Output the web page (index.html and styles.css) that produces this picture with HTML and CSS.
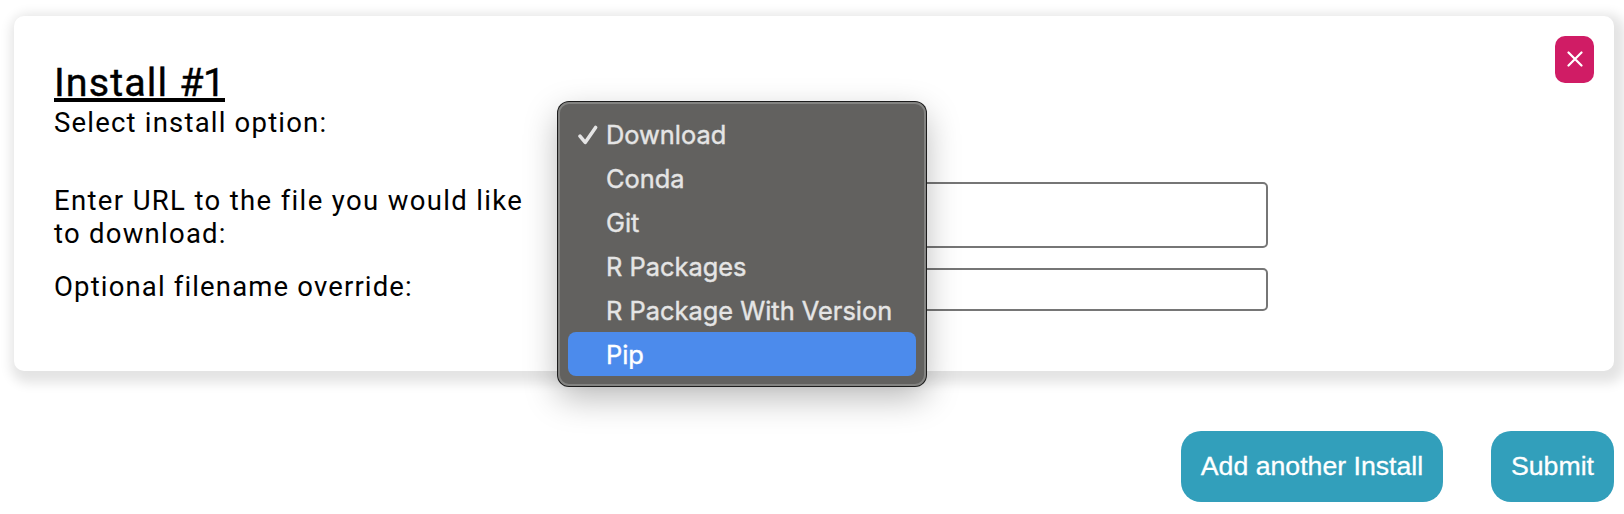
FILE: index.html
```html
<!DOCTYPE html>
<html lang="en">
<head>
<meta charset="utf-8">
<title>Install</title>
<link rel="stylesheet" href="styles.css">
</head>
<body>
<main class="page">
  <section class="card">
    <form class="fields">
      <h2 class="title"><span class="title-text">Install <span class="title-number">#1</span></span></h2>
      <div class="row row-select">
        <label class="label label-select">Select install option:</label>
        <div class="select">
          <ul class="menu">
            <li class="option"><svg class="check" viewBox="0 0 20 20"><path d="M2 11.2 7.2 17.4 17.6 2.4"/></svg>Download</li>
            <li class="option">Conda</li>
            <li class="option">Git</li>
            <li class="option">R Packages</li>
            <li class="option">R Package With Version</li>
            <li class="option option-active">Pip</li>
          </ul>
        </div>
      </div>
      <div class="row row-url">
        <label class="label label-url">Enter URL to the file you would like<br><span class="label-url-end">to download:</span></label>
        <input class="input" type="text">
      </div>
      <div class="row row-name">
        <label class="label label-name">Optional filename override:</label>
        <input class="input" type="text">
      </div>
    </form>
    <button class="close" aria-label="Remove"><svg class="cross" viewBox="0 0 16 16"><path d="M1.5 1.5 14.5 14.5M14.5 1.5 1.5 14.5"/></svg></button>
  </section>
  <div class="actions">
    <button class="button button-add">Add another Install</button>
    <button class="button button-submit">Submit</button>
  </div>
</main>
</body>
</html>
```
FILE: styles.css
```css
* { box-sizing: border-box; }
body { margin: 0; background: #fff; overflow: hidden; font-family: Roboto, sans-serif; color: #000; }
.page { padding: 16px 10px 0 14px; }
.card {
  display: flex;
  justify-content: space-between;
  align-items: flex-start;
  height: 355px;
  padding: 20px 20px 0 40px;
  border-radius: 10px;
  background: #fff;
  box-shadow: 4px 5px 12px 7px #e4e4e4;
}
.fields { width: 1214px; padding-top: 22px; }
.title { margin: 0; height: 48px; font-size: 39.5px; line-height: 50px; font-weight: 400; -webkit-text-stroke: 0.4px #000; }
.title-text { display: inline-block; width: 171px; height: 44px; border-bottom: 4px solid #000; white-space: nowrap; letter-spacing: 1.1px; }
.title-number { letter-spacing: -0.5px; }
.row { display: grid; grid-template-columns: 504px 1fr; }
.row-select { height: 76px; }
.row-url { height: 66px; margin-bottom: 20px; }
.row-name { height: 43px; }
.label { font-size: 27.5px; line-height: 33px; white-space: nowrap; }
.label-select { letter-spacing: 1.2px; }
.label-url { padding-top: 2px; letter-spacing: 1.35px; }
.label-url-end { letter-spacing: 1.25px; }
.label-name { padding-top: 2px; letter-spacing: 1.15px; }
.input { width: 100%; height: 100%; border: 2px solid #767676; border-radius: 5px; background: #fff; }
.row-url .input { height: 66px; }
.select { position: relative; }
.menu {
  position: absolute;
  left: 0;
  top: -4px;
  z-index: 1;
  width: 368px;
  height: 284px;
  margin: 0;
  padding: 8px 8px;
  list-style: none;
  border: 2px solid #838381;
  border-radius: 11px;
  background: #62615f;
  box-shadow: 0 0 0 1px #1c1c1c, 0 12px 34px rgba(0, 0, 0, 0.28);
  font-family: Inter, sans-serif;
  font-size: 25.4px;
  color: #e5e5e5;
}
.option { display: flex; align-items: center; position: relative; height: 44px; padding-left: 38px; border-radius: 8px; white-space: nowrap; -webkit-text-stroke: 0.4px currentColor; }
.option-active { background: #4c8bec; color: #fff; }
.check { position: absolute; left: 10px; top: 13px; width: 20px; height: 20px; fill: none; stroke: #e5e5e5; stroke-width: 3.5; stroke-linecap: round; stroke-linejoin: round; }
.close { display: flex; align-items: center; justify-content: center; width: 39px; height: 47px; padding: 0 0 1px; border: 0; border-radius: 10px; background: #d01c65; }
.cross { width: 16px; height: 16px; fill: none; stroke: #fff; stroke-width: 2.2; stroke-linecap: round; }
.actions { display: flex; justify-content: flex-end; gap: 48px; margin-top: 60px; }
.button { height: 71px; padding: 0 0 1px; border: 0; border-radius: 20px; background: #329fbb; color: #fff; font: 26.67px "Liberation Sans", sans-serif; white-space: nowrap; -webkit-text-stroke: 0.3px #fff; }
.button-add { width: 262px; }
.button-submit { width: 123px; }
```
